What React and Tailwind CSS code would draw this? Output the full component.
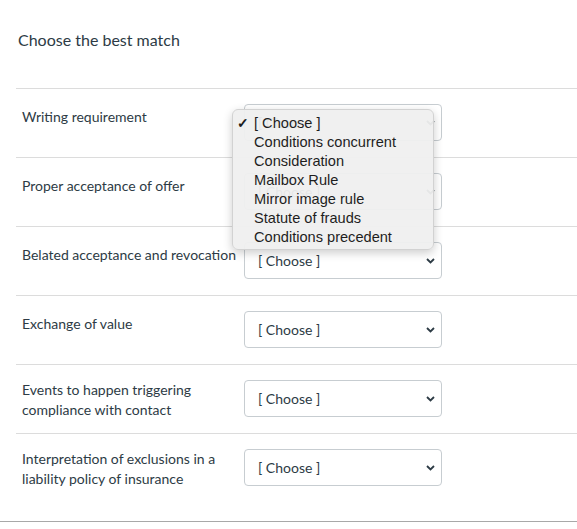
import React from "react";

const rows = [
  ["Writing requirement", 1],
  ["Proper acceptance of offer", 1],
  ["Belated acceptance and revocation", 1],
  ["Exchange of value", 1],
  ["Events to happen triggering compliance with contact", 2],
  ["Interpretation of exclusions in a liability policy of insurance", 2],
];

const options = [
  "[ Choose ]",
  "Conditions concurrent",
  "Consideration",
  "Mailbox Rule",
  "Mirror image rule",
  "Statute of frauds",
  "Conditions precedent",
];

function Chevron() {
  return (
    <svg width="9" height="6" viewBox="0 0 9 6" className="shrink-0">
      <path d="M1 1l3.5 3.5L8 1" fill="none" stroke="#2d3b45" strokeWidth="1.8" />
    </svg>
  );
}

function FakeSelect() {
  return (
    <div className="w-[198px] h-[37px] shrink-0 border border-[#c7cdd1] rounded-[4px] bg-white flex items-center justify-between pl-[13px] pr-[6px] text-[14px] text-[#2d3b45]">
      <span>[ Choose ]</span>
      <Chevron />
    </div>
  );
}

export default function App() {
  return (
    <div className="relative w-[577px] h-[529px] overflow-hidden bg-white font-['Lato',sans-serif] text-[#2d3b45]">
      <div className="ml-4 w-[600px]">
        <div className="h-[89px] border-b border-[#dcdcdc] pt-[30px] pl-[2px] text-[16px] leading-5">
          Choose the best match
        </div>

        {rows.map(([label, lines], i) => (
          <div
            key={i}
            className={`flex pt-[15px] ${i === rows.length - 1 ? "h-[87px]" : "h-[69px] border-b border-[#dcdcdc] pb-4"}`}
          >
            <div className={`w-[228px] pl-[6px] pr-2 text-[14px] leading-5 ${lines === 1 ? "mt-[3px]" : "mt-0"}`}>
              {label}
            </div>
            <FakeSelect />
          </div>
        ))}
      </div>
      <div className="border-b border-[#a8a8a8]" />

      <div className="absolute left-[232px] top-[109px] w-[202px] h-[141px] rounded-[6px] bg-[#efefef]/95 border border-[#d2d2d2] shadow-[0_3px_10px_rgba(0,0,0,0.2)] pt-[4px] font-['Liberation_Sans',sans-serif] text-[14.6px] text-[#1e1e1e]">
        {options.map((o, i) => (
          <div key={o} className="flex h-[19px] items-center">
            <span className="w-[21px] pl-[4px] text-[14px] font-bold">{i === 0 ? "✓" : ""}</span>
            <span>{o}</span>
          </div>
        ))}
      </div>
    </div>
  );
}
